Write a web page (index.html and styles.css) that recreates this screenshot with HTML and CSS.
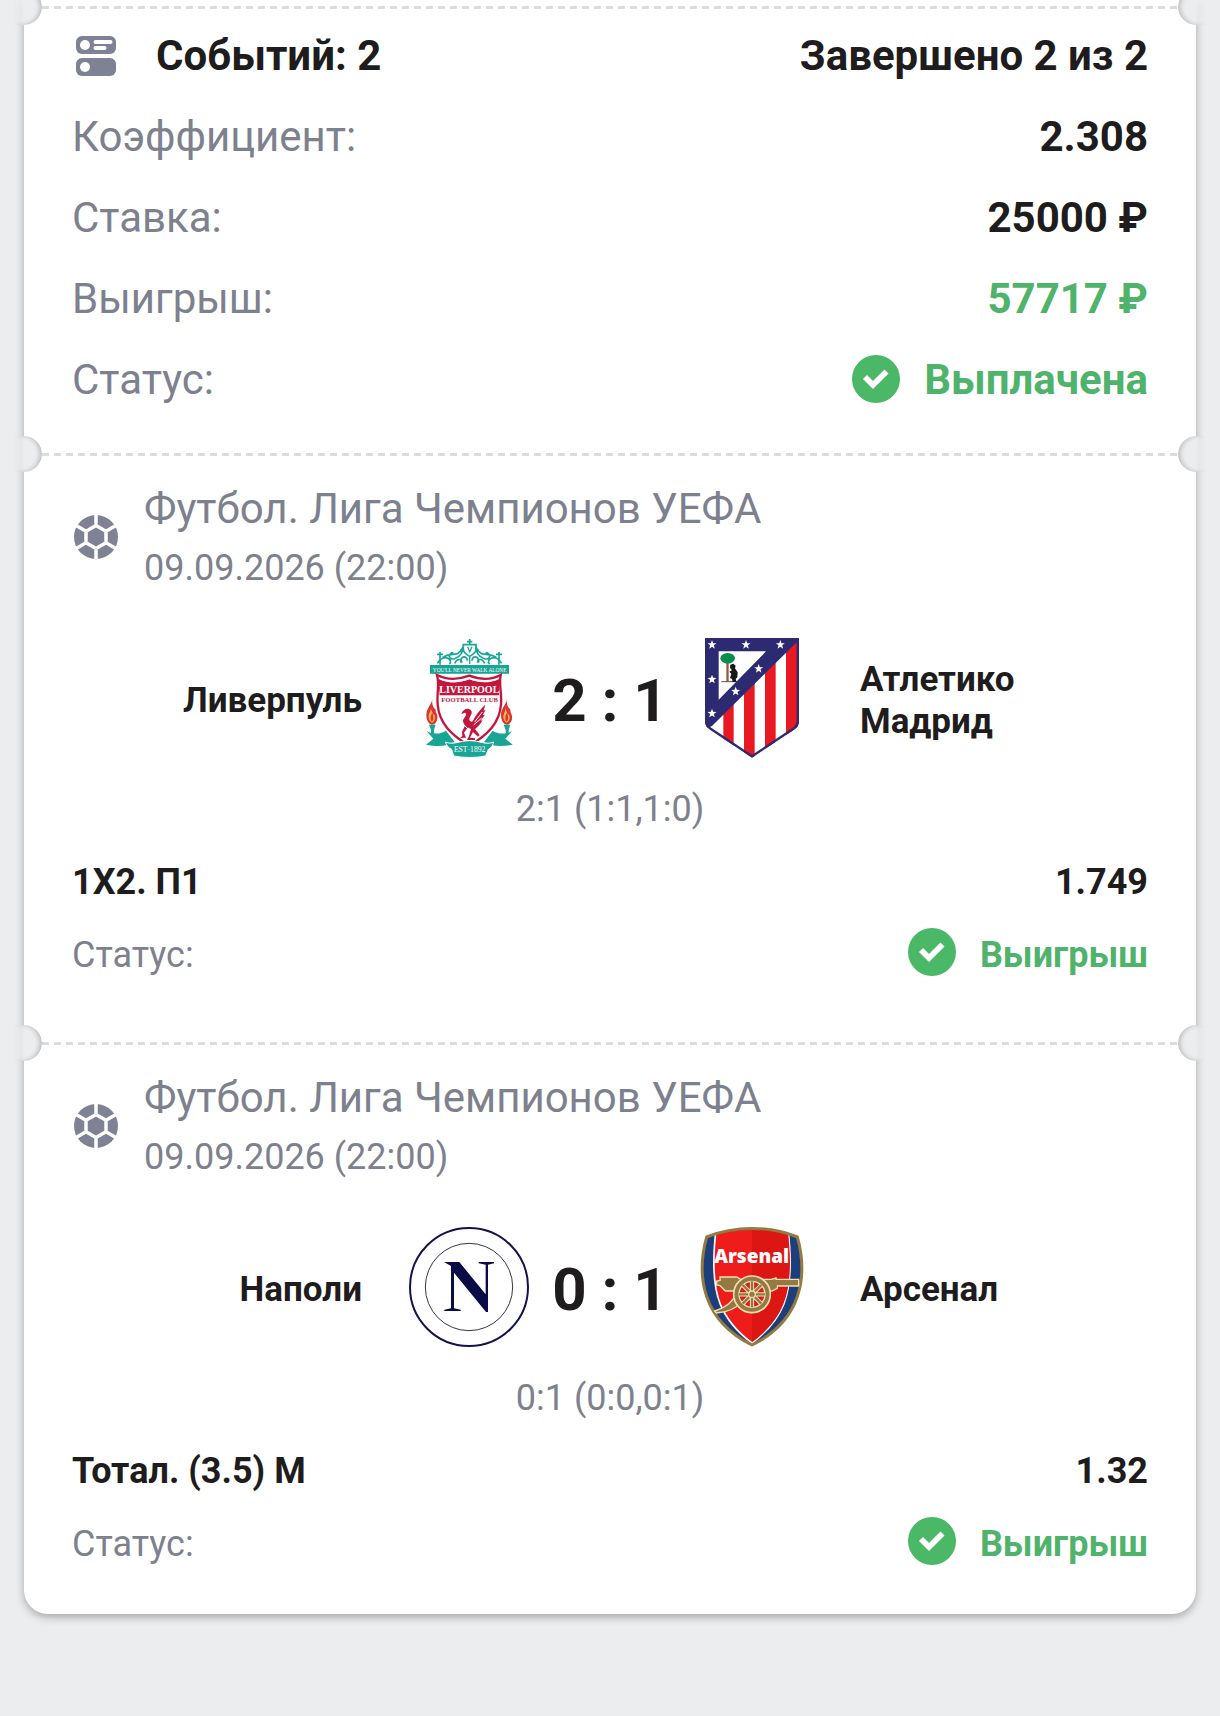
FILE: index.html
```html
<!DOCTYPE html>
<html lang="ru">
<head>
    <meta charset="UTF-8">
    <meta name="viewport" content="width=device-width, initial-scale=1.0">
    <title>Купон</title>
    <link rel="stylesheet" href="styles.css">
</head>
<body>
    <!-- общие иконки -->
    <svg class="sprite" aria-hidden="true">
        <symbol id="icon-check" viewBox="0 0 48 48">
            <circle cx="24" cy="24" r="24" fill="#4ab866"/>
            <path d="M13 22l8 8L34.500 16.500" fill="none" stroke="#fff" stroke-width="5.700"/>
        </symbol>
        <symbol id="icon-ball" viewBox="0 0 48 48">
            <circle cx="24" cy="24" r="22" fill="#7e8294"/>
            <path d="M24 12.5l10 5.75v11.5l-10 5.75-10-5.75v-11.5zM24 13V0M34 18.2l12-7M34 29.8l12 7M24 35v13M14 29.8l-12 7M14 18.2l-12-7" fill="none" stroke="#fff" stroke-width="3.500"/>
        </symbol>
    </svg>

    <main class="coupon">
        <div class="divider"></div>

        <section class="summary">
            <div class="row">
                <h1 class="events-count">
                    <svg class="icon" viewBox="0 0 48 48" aria-hidden="true">
                        <rect x="4" y="4" width="40" height="18" rx="6" fill="#7e8294"/>
                        <rect x="4" y="26" width="40" height="18" rx="6" fill="#7e8294"/>
                        <circle cx="13" cy="13" r="5" fill="#fff"/>
                        <circle cx="13" cy="35" r="5" fill="#fff"/>
                        <path d="M23.500 10h15M23.500 16h9" stroke="#fff" stroke-width="4" stroke-linecap="round"/>
                    </svg>
                    Событий: 2
                </h1>
                <span class="value">Завершено 2 из 2</span>
            </div>
            <div class="row">
                <span class="label">Коэффициент:</span>
                <span class="value">2.308</span>
            </div>
            <div class="row">
                <span class="label">Ставка:</span>
                <span class="value">25000 ₽</span>
            </div>
            <div class="row">
                <span class="label">Выигрыш:</span>
                <span class="value green">57717 ₽</span>
            </div>
            <div class="row">
                <span class="label">Статус:</span>
                <span class="value status green">
                    <svg class="icon" aria-hidden="true"><use href="#icon-check"/></svg>
                    <span>Выплачена</span>
                </span>
            </div>
        </section>

        <div class="divider"></div>

        <section class="event">
            <div class="event-head">
                <svg class="icon" aria-hidden="true"><use href="#icon-ball"/></svg>
                <div>
                    <h2 class="league">Футбол. Лига Чемпионов УЕФА</h2>
                    <time class="date" datetime="2026-09-09T22:00">09.09.2026 (22:00)</time>
                </div>
            </div>
            <div class="match">
                <span class="team home">Ливерпуль</span>
                <svg class="crest" viewBox="24 54 360 360" role="img" aria-label="Ливерпуль">
                    <!-- ворота -->
                    <g fill="none" stroke="#19a596" stroke-width="5">
                        <path d="M120 96v38M111 103h18M297 96v38M288 103h18M209 57v18M201 65h16"/>
                        <path d="M112 130c22-34 50-8 36 2M128 112c26-18 44 2 58-26M160 98c-20 2-12 24 4 18s26-16 24-36"/>
                        <path d="M305 130c-22-34-50-8-36 2M289 112c-26-18-44 2-58-26M257 98c20 2 12 24-4 18s-26-16-24-36"/>
                        <path d="M190 74h38v14c0 12-12 17-19 21-7-4-19-9-19-21zM182 128c0-24 20-20 20-6M236 128c0-24-20-20-20-6M164 130c8-16 20-14 22-2M254 130c-8-16-20-14-22-2"/>
                        <path d="M203 80l6 15 7-15M209 110v22" stroke-width="4"/>
                    </g>
                    <path d="M90 135h237v26H90z" fill="#19a596"/>
                    <text class="crest-serif" x="209" y="155" font-size="16" text-anchor="middle" fill="#fff">YOU'LL NEVER WALK ALONE</text>
                    <!-- ленты -->
                    <g fill="#19a596">
                        <path d="M80 334c22 10 44 8 58-2l26 34c-24 14-54 14-86 8l22-18z"/>
                        <path d="M336 334c-22 10-44 8-58-2l-26 34c24 14 54 14 86 8l-22-18z"/>
                    </g>
                    <!-- щит -->
                    <path d="M111 165c36 18 70 12 97 2 27 10 61 16 94-2-6 28 4 54 1 88-4 56-40 92-95 124-55-32-91-68-95-124-3-34 6-60-2-88z" fill="#fff" stroke="#c4163d" stroke-width="7"/>
                    <path d="M115 176c34 16 66 12 93 2 27 10 58 14 91-2l-2 50H119z" fill="#c4163d"/>
                    <path d="M119 177c34 14 63 9 89-1 26 10 57 13 87-1" fill="none" stroke="#fff" stroke-width="3"/>
                    <text class="crest-serif" x="208" y="220" font-size="30" text-anchor="middle" fill="#fff" font-weight="bold">LIVERPOOL</text>
                    <text class="crest-serif" x="209" y="246" font-size="20" text-anchor="middle" fill="#c4163d" font-weight="bold">FOOTBALL CLUB</text>
                    <!-- птица -->
                    <g fill="#c4163d">
                        <path d="M184 282c4-14 18-20 27-13 10 8 0 18-3 26-1 8 4 12 10 9 8-18 22-34 37-50-1 9-3 14-5 18l7-3-9 17 7-2-13 18 6-1c-8 14-16 21-23 26l14 18-5 5-15-14-9 17 15 2v5h-24l6-12 6-21c-13-5-23-13-24-24 0-8 11-15 9-22-3-7-9 1-15 1z"/>
                        <path d="M204 322l-12 16 6 15-18 1 7-6-1-13 9-18z"/>
                    </g>
                    <path d="M224 306l23-30M221 315l24-21M193 316l12 12" stroke="#fff" stroke-width="3" fill="none"/>
                    <path d="M136 366c24 10 42-4 73-4s48 14 72 4c-4 14-8 18-16 22l-8 20c-30 6-66 6-96 0l-6-20c-10-4-15-12-19-22z" fill="#19a596" stroke="#fff" stroke-width="3"/>
                    <text class="crest-serif" x="209" y="396" font-size="23" text-anchor="middle" fill="#fff">EST·1892</text>
                    <!-- факелы -->
                    <g id="torch">
                        <path d="M97 236c-2 18-18 28-18 50 0 18 10 28 17 28 10 0 18-12 16-26-1-8-6-10-5-20-8-4-12-18-10-32z" fill="#dc3436"/>
                        <path d="M93 258c2 14-8 22-7 34 1 9 6 15 10 16 7-2 11-11 8-22-5-4-12-14-11-28z" fill="#f7b447"/>
                        <path d="M97 278c-6 10-7 16-2 27 7-6 6-16 2-27z" fill="#dc3436"/>
                        <path d="M87 314h20l-5 16v13h-9v-13z" fill="#19a596"/>
                    </g>
                    <use href="#torch" x="224"/>
                </svg>
                <span class="score">2 : 1</span>
                <svg class="crest" viewBox="36 54 360 360" role="img" aria-label="Атлетико Мадрид">
                    <defs>
                        <clipPath id="atletico-shield"><path d="M75 54h282v248c0 14-6 20-16 28L216 413 91 330c-10-8-16-14-16-28z"/></clipPath>
                        <path id="star" d="M0-14l3.500 9.500 10 .3-8 6.200 2.800 9.900L0 6.200-8.300 11.900l2.800-9.900-8-6.200 10-.3z" fill="#fff"/>
                    </defs>
                    <g clip-path="url(#atletico-shield)">
                        <path d="M75 54h282v360H75z" fill="#fff"/>
                        <path d="M130 54h31v360h-31zM192 54h32v360h-32zM255 54h32v360h-32zM318 54h39v360h-39z" fill="#e81922"/>
                        <path d="M75 54h282v6L96 318l-21 10z" fill="#2c2a70"/>
                        <path d="M75 54h282v248c0 14-6 20-16 28L216 413 91 330c-10-8-16-14-16-28z" fill="none" stroke="#2c2a70" stroke-width="14"/>
                    </g>
                    <path d="M116 94h142L116 239z" fill="#fff"/>
                    <path d="M139 128h7v57h-7z" fill="#9b5b3a"/>
                    <ellipse cx="143" cy="115" rx="22" ry="16" fill="#0a8c4f"/>
                    <path d="M124 185h50" stroke="#555" stroke-width="3"/>
                    <path d="M151 134l9-3 7 6-2 8 8 12-1 15-5 5 3 9h-12l-2-9-6-3 4-12-6-7 8-4-6-8z" fill="#171717"/>
                    <use href="#star" x="96" y="74"/>
                    <use href="#star" x="198" y="74"/>
                    <use href="#star" x="301" y="74"/>
                    <use href="#star" x="96" y="178"/>
                    <use href="#star" x="96" y="280"/>
                    <use href="#star" x="167" y="214"/>
                    <use href="#star" x="236" y="146"/>
                </svg>
                <span class="team">Атлетико Мадрид</span>
            </div>
            <p class="periods">2:1 (1:1,1:0)</p>
            <div class="row small">
                <span class="value">1X2. П1</span>
                <span class="value">1.749</span>
            </div>
            <div class="row small">
                <span class="label">Статус:</span>
                <span class="value status green">
                    <svg class="icon" aria-hidden="true"><use href="#icon-check"/></svg>
                    <span>Выигрыш</span>
                </span>
            </div>
        </section>

        <div class="divider"></div>

        <section class="event">
            <div class="event-head">
                <svg class="icon" aria-hidden="true"><use href="#icon-ball"/></svg>
                <div>
                    <h2 class="league">Футбол. Лига Чемпионов УЕФА</h2>
                    <time class="date" datetime="2026-09-09T22:00">09.09.2026 (22:00)</time>
                </div>
            </div>
            <div class="match">
                <span class="team home">Наполи</span>
                <svg class="crest" viewBox="24 36 360 360" role="img" aria-label="Наполи">
                    <circle cx="207" cy="216" r="177" fill="#fff" stroke="#11144a" stroke-width="6"/>
                    <circle cx="207" cy="216" r="131" fill="none" stroke="#333647" stroke-width="3"/>
                    <path d="M132 141h46l79 97v-89l-21-4v-4h46v4l-18 4v142h-6l-96-118v107l20 4v4h-49v-4l20-4V153z" fill="#090c46"/>
                </svg>
                <span class="score">0 : 1</span>
                <svg class="crest" viewBox="36 36 360 360" role="img" aria-label="Арсенал">
                    <defs>
                        <clipPath id="arsenal-shield"><path d="M80 66c84-34 188-34 272 0 32 116 14 250-136 324C66 316 48 182 80 66z"/></clipPath>
                    </defs>
                    <g clip-path="url(#arsenal-shield)">
                        <path d="M36 36h360v360H36z" fill="#1c3f7c"/>
                        <path d="M109 36h214c12 94 12 172-12 232-18 44-52 84-95 116-43-32-77-72-95-116-24-60-24-138-12-232z" fill="#ee1c1b" stroke="#fff" stroke-width="5"/>
                        <path d="M216 36h106c12 94 12 172-12 232-18 44-52 84-94 114z" fill="#dc1713"/>
                    </g>
                    <path d="M80 66c84-34 188-34 272 0 32 116 14 250-136 324C66 316 48 182 80 66z" fill="none" stroke="#927a42" stroke-width="9"/>
                    <text class="crest-sans" x="215" y="145" font-size="57" text-anchor="middle" fill="#fff" font-weight="800">Arsenal</text>
                    <!-- пушка -->
                    <g fill="#927a42" stroke="#f4dfb4" stroke-width="4">
                        <path d="M120 186h50l12 7h92l14-4v4h68v20h-64v7l-16 8H136l-16-16-10-2v-12l10-2z"/>
                        <path d="M172 228c-10 30-36 50-68 60l6 6c36-2 60-16 76-34z"/>
                    </g>
                    <circle cx="216" cy="238" r="55" fill="#927a42" stroke="#f4dfb4" stroke-width="5"/>
                    <circle cx="216" cy="238" r="39" fill="#d81b1c" stroke="#f4dfb4" stroke-width="4"/>
                    <path d="M177 238h78M216 199v78M188 210l56 56M244 210l-56 56" stroke="#f4dfb4" stroke-width="13"/>
                    <path d="M177 238h78M216 199v78M188 210l56 56M244 210l-56 56" stroke="#927a42" stroke-width="7"/>
                    <circle cx="216" cy="238" r="10" fill="#927a42" stroke="#f4dfb4" stroke-width="4"/>
                </svg>
                <span class="team">Арсенал</span>
            </div>
            <p class="periods">0:1 (0:0,0:1)</p>
            <div class="row small">
                <span class="value">Тотал. (3.5) М</span>
                <span class="value">1.32</span>
            </div>
            <div class="row small">
                <span class="label">Статус:</span>
                <span class="value status green">
                    <svg class="icon" aria-hidden="true"><use href="#icon-check"/></svg>
                    <span>Выигрыш</span>
                </span>
            </div>
        </section>
    </main>
</body>
</html>
```
FILE: styles.css
```css
* {
    box-sizing: border-box;
}

body {
    margin: 0;
    background-color: #ebedee;
    color: #1e1c1c;
    font-family: Roboto, sans-serif;
    font-size: 42px;
    line-height: 49px;
}

h1,
h2,
p {
    margin: 0;
    font-size: inherit;
}

.sprite {
    position: absolute;
    width: 0;
    height: 0;
}

.coupon {
    display: flex;
    flex-direction: column;
    margin: 0 24px 48px;
    background-color: #fff;
    border-radius: 0 0 24px 24px;
    box-shadow: 0 3px 9px rgba(0, 0, 0, 0.3);
}

/* линия отрыва с вырезами по краям */
.divider {
    position: relative;
    height: 36px;
    background: repeating-linear-gradient(90deg, #dcdcdc 0 7px, #fff 7px 12px) 18px 17px / calc(100% - 36px) 3px no-repeat;
}

.divider:first-child {
    margin-top: -11px;
}

.divider::before,
.divider::after {
    content: "";
    position: absolute;
    top: 0;
    width: 30px;
    height: 36px;
    background-color: #ebedee;
}

.divider::before {
    left: -12px;
    border-radius: 0 18px 18px 0;
    box-shadow: inset -3px 0 5px -1px rgba(0, 0, 0, 0.22);
    mask-image: linear-gradient(90deg, transparent 2px, #000 12px);
}

.divider::after {
    right: -12px;
    border-radius: 18px 0 0 18px;
    box-shadow: inset 3px 0 5px -1px rgba(0, 0, 0, 0.22);
    mask-image: linear-gradient(270deg, transparent 2px, #000 12px);
}

.icon {
    flex: none;
    width: 48px;
    height: 48px;
}

.summary {
    display: flex;
    flex-direction: column;
    gap: 32px;
    padding: 6px 48px 32px;
}

.row {
    display: flex;
    justify-content: space-between;
}

.events-count {
    display: flex;
    align-items: flex-end;
    gap: 36px;
    font-weight: 700;
}

.label {
    color: #7d818e;
}

.value {
    font-weight: 700;
}

.status {
    display: flex;
    gap: 24px;
}

.green {
    color: #4fb36c;
}

.event {
    padding: 12px 48px 49px;
}

.event-head {
    display: flex;
    align-items: center;
    gap: 24px;
    color: #7d818e;
}

.league {
    margin-bottom: 14px;
    font-weight: 400;
}

.date {
    display: block;
    font-size: 36px;
    line-height: 42px;
}

.match {
    display: grid;
    grid-template-columns: 1fr 120px 164px 120px 1fr;
    align-items: center;
    margin-top: 49px;
}

.team {
    padding: 6px 48px 0;
    font-size: 35px;
    font-weight: 700;
    line-height: 42px;
}

.home {
    padding-right: 46px;
    text-align: right;
}

.crest {
    display: block;
    width: 120px;
    height: 120px;
    overflow: visible;
}

.crest-serif {
    font-family: "Liberation Serif", serif;
}

.crest-sans {
    font-family: "Open Sans", sans-serif;
}

.score {
    padding-top: 6px;
    font-size: 60px;
    font-weight: 700;
    line-height: 70px;
    text-align: center;
}

.periods {
    margin: 30px 0 31px;
    color: #7d818e;
    font-size: 36px;
    line-height: 42px;
    text-align: center;
}

.small {
    font-size: 36px;
    line-height: 42px;
}

.small + .small {
    align-items: flex-end;
    margin-top: 25px;
}

.small .status {
    align-items: flex-end;
}
```
